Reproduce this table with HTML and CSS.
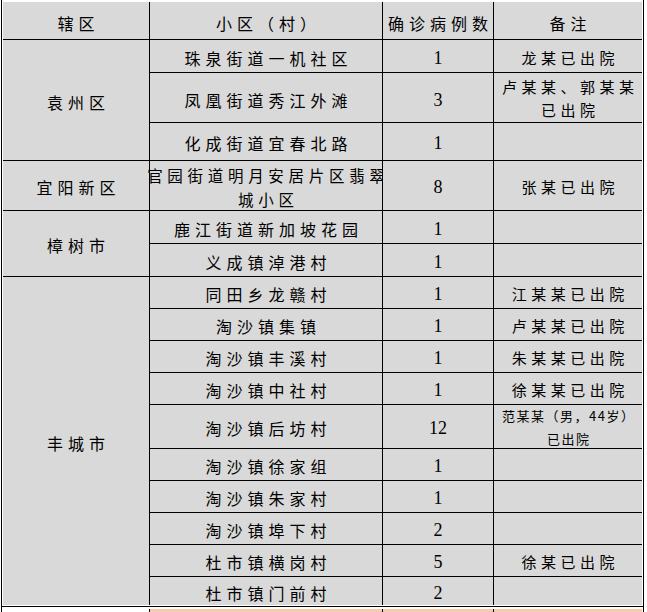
FILE: index.html
```html
<!DOCTYPE html>
<html lang="zh-CN">
<head>
<meta charset="utf-8">
<title>病例表</title>
<link rel="stylesheet" href="styles.css">
</head>
<body>
<div class="sheet">
  <div class="grid">
    <div class="c h"><span>辖区</span></div>
    <div class="c h"><span>小区（村）</span></div>
    <div class="c h h3"><span>确诊病例数</span></div>
    <div class="c h"><span>备注</span></div>

    <div class="c d span3"><span>袁州区</span></div>
    <div class="c v"><span>珠泉街道一机社区</span></div>
    <div class="c n">1</div>
    <div class="c r"><span>龙某已出院</span></div>

    <div class="c v low"><span>凤凰街道秀江外滩</span></div>
    <div class="c n low">3</div>
    <div class="c r two"><span>卢某某、郭某某<br>已出院</span></div>

    <div class="c v"><span>化成街道宜春北路</span></div>
    <div class="c n">1</div>
    <div class="c r"></div>

    <div class="c d"><span>宜阳新区</span></div>
    <div class="c v two tight"><span>官园街道明月安居片区翡翠<br>城小区</span></div>
    <div class="c n">8</div>
    <div class="c r"><span>张某已出院</span></div>

    <div class="c d span2"><span>樟树市</span></div>
    <div class="c v"><span>鹿江街道新加坡花园</span></div>
    <div class="c n">1</div>
    <div class="c r"></div>

    <div class="c v"><span>义成镇淖港村</span></div>
    <div class="c n">1</div>
    <div class="c r"></div>

    <div class="c d span10"><span>丰城市</span></div>
    <div class="c v"><span>同田乡龙赣村</span></div>
    <div class="c n">1</div>
    <div class="c r"><span>江某某已出院</span></div>

    <div class="c v"><span>淘沙镇集镇</span></div>
    <div class="c n">1</div>
    <div class="c r"><span>卢某某已出院</span></div>

    <div class="c v"><span>淘沙镇丰溪村</span></div>
    <div class="c n">1</div>
    <div class="c r"><span>朱某某已出院</span></div>

    <div class="c v"><span>淘沙镇中社村</span></div>
    <div class="c n">1</div>
    <div class="c r"><span>徐某某已出院</span></div>

    <div class="c v"><span>淘沙镇后坊村</span></div>
    <div class="c n">12</div>
    <div class="c r two small"><span>范某某（男，44岁）<br>已出院</span></div>

    <div class="c v"><span>淘沙镇徐家组</span></div>
    <div class="c n">1</div>
    <div class="c r"></div>

    <div class="c v"><span>淘沙镇朱家村</span></div>
    <div class="c n">1</div>
    <div class="c r"></div>

    <div class="c v"><span>淘沙镇埠下村</span></div>
    <div class="c n">2</div>
    <div class="c r"></div>

    <div class="c v"><span>杜市镇横岗村</span></div>
    <div class="c n">5</div>
    <div class="c r"><span>徐某已出院</span></div>

    <div class="c v"><span>杜市镇门前村</span></div>
    <div class="c n">2</div>
    <div class="c r"></div>
  </div>
</div>
<div class="next">
  <div class="next-grid">
    <div class="blank"></div>
    <div class="peach"></div>
    <div class="peach"></div>
    <div class="peach"></div>
  </div>
</div>
</body>
</html>
```

FILE: styles.css
```css
html, body {
  margin: 0;
  padding: 0;
  background: #fff;
  overflow: hidden;
}
body {
  width: 647px;
  height: 612px;
  font-family: "Noto Sans CJK SC", "Noto Sans", sans-serif;
  color: #000;
}
.sheet {
  width: max-content;
  margin-left: 1px;
  border-left: 1px solid #000;
  border-right: 1px solid #000;
  border-bottom: 1px solid #000;
  padding: 2px 1px 1px 1px;
  background: #fff;
}
.grid {
  display: grid;
  grid-template-columns: 146px 232px 110px 148px;
  grid-template-rows: 37px 32px 49px 37px 49px 32px 32px 31px 31px 31px 31px 43px 31px 31px 31px 31px 28px;
  gap: 1px;
  background: #000;
}
.c {
  --ls: 5px;
  background: #d9d9d9;
  display: flex;
  align-items: center;
  justify-content: center;
  text-align: center;
  white-space: nowrap;
  font-size: 16px;
  line-height: 20px;
  padding-top: 3px;
  box-sizing: border-box;
  min-width: 0;
}
.c span {
  letter-spacing: var(--ls);
  margin-right: calc(-1 * var(--ls));
}
.h { padding-top: 5px; }
.h3 { --ls: 5px; }
.span3 { grid-row: span 3; }
.span2 { grid-row: span 2; }
.span10 { grid-row: span 10; }
.n {
  font-family: "Liberation Serif", "Times New Roman", serif;
  font-size: 18px;
}
.r {
  --ls: 4.5px;
  font-size: 15px;
}
.two {
  line-height: 23px;
  padding-top: 1px;
}
.tight {
  --ls: 4.7px;
  line-height: 24px;
  font-size: 15.5px;
  padding-top: 2px;
}
.small {
  --ls: 1.5px;
  font-size: 13px;
  line-height: 23px;
}
.low { padding-top: 5px; }
.next {
  width: max-content;
  margin-left: 1px;
  border-left: 1px solid #000;
  border-right: 1px solid #000;
  padding: 2px 1px 0 1px;
}
.next-grid {
  display: grid;
  grid-template-columns: 146px 232px 110px 148px;
  grid-template-rows: 12px;
  column-gap: 1px;
  background: #000;
}
.blank { background: #fff; }
.peach { background: #f8cbad; }
```
